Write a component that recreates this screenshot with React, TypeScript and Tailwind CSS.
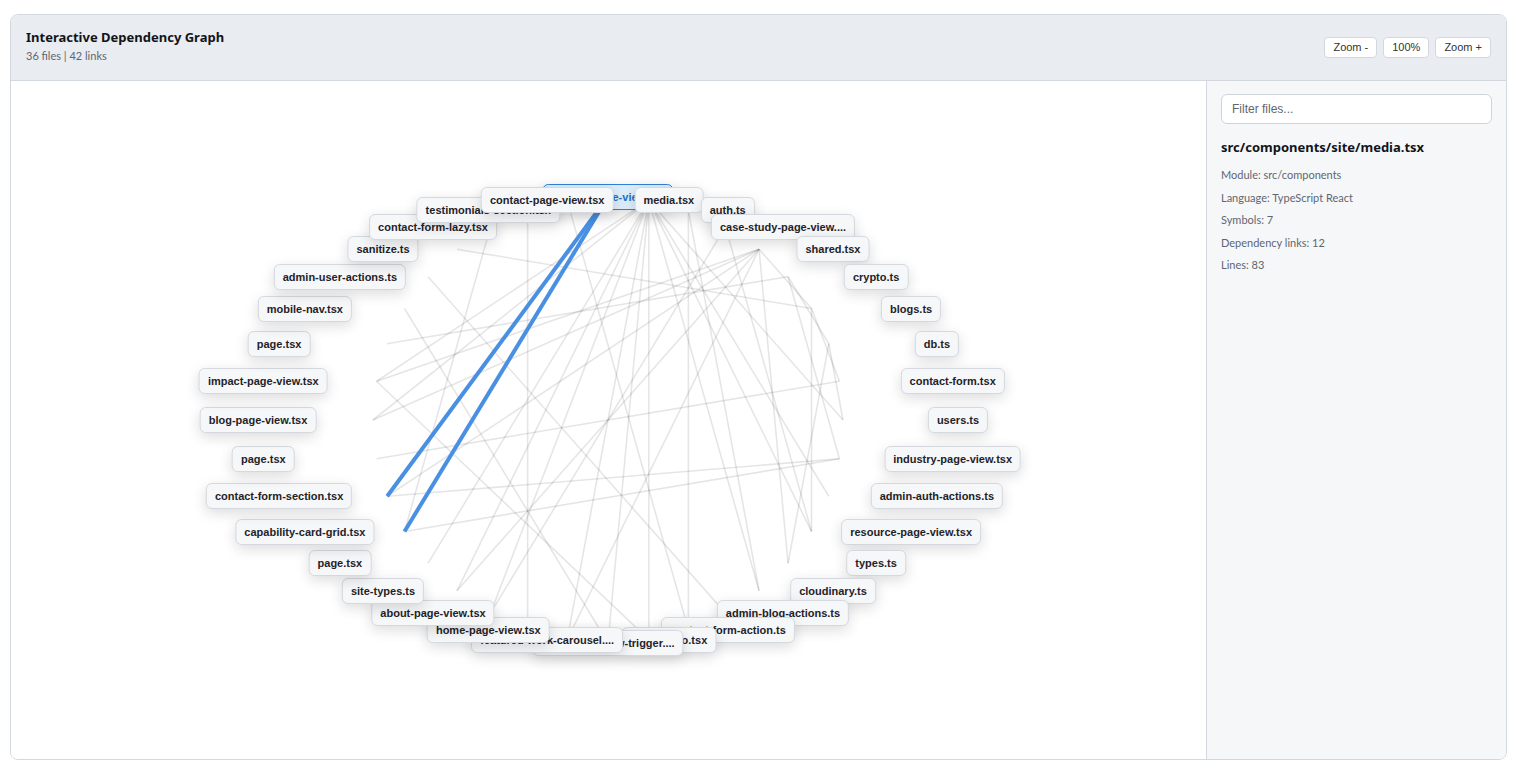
import React from "react";

const LABELS: string[] = [
  "service-page-view.tsx",
  "media.tsx",
  "auth.ts",
  "case-study-page-view....",
  "shared.tsx",
  "crypto.ts",
  "blogs.ts",
  "db.ts",
  "contact-form.tsx",
  "users.ts",
  "industry-page-view.tsx",
  "admin-auth-actions.ts",
  "resource-page-view.tsx",
  "types.ts",
  "cloudinary.ts",
  "admin-blog-actions.ts",
  "contact-form-action.ts",
  "footer-logo.tsx",
  "contact-window-trigger....",
  "featured-work-carousel....",
  "home-page-view.tsx",
  "about-page-view.tsx",
  "site-types.ts",
  "page.tsx",
  "capability-card-grid.tsx",
  "contact-form-section.tsx",
  "page.tsx",
  "blog-page-view.tsx",
  "impact-page-view.tsx",
  "page.tsx",
  "mobile-nav.tsx",
  "admin-user-actions.ts",
  "sanitize.ts",
  "contact-form-lazy.tsx",
  "testimonials-section.tsx",
  "contact-page-view.tsx",
];

const GRAY: [number, number][] = [
  [1, 17], [1, 28], [1, 21], [1, 22], [1, 19], [1, 18], [1, 12], [1, 11], [1, 14], [1, 9], [1, 27], [1, 23],
  [34, 20], [4, 28], [4, 27], [4, 13], [4, 6], [4, 22], [4, 19], [4, 25],
  [32, 6], [30, 18], [25, 10], [24, 10], [6, 12], [7, 13], [5, 7], [6, 8], [7, 9], [33, 24],
  [2, 16], [2, 14], [3, 21], [3, 12], [35, 16], [28, 17], [29, 5], [31, 15], [8, 26], [5, 10],
];

const BLUE: [number, number][] = [
  [0, 25],
  [0, 24],
];

const CX = 597;
const CY = 339;
const RX = 350;
const RY = 223;
const IRX = 235;

function angle(k: number) {
  return ((-90 + k * 10) * Math.PI) / 180;
}
function outer(k: number) {
  const a = angle(k);
  return { x: CX + RX * Math.cos(a), y: CY + RY * Math.sin(a) };
}
function inner(k: number) {
  const a = angle(k);
  return { x: CX + IRX * Math.cos(a), y: CY + RY * Math.sin(a) };
}

const ui = { fontFamily: "Lato, 'Noto Sans', sans-serif" };
const head = { fontFamily: "'Noto Sans', Lato, sans-serif" };
const arial = { fontFamily: "'Liberation Sans', Arial, sans-serif" };

export default function App() {
  return (
    <div className="min-h-[774px] bg-white pl-[10px] pr-[12px] pt-[14px]" style={ui}>
      <div className="flex h-[746px] flex-col overflow-hidden rounded-[8px] border border-[#d3d8de] bg-white">
        <div className="flex h-[66px] shrink-0 items-center justify-between border-b border-[#d3d8de] bg-[#e9ecf0] pl-[15px] pr-[15px]">
          <div className="mb-[3px]">
            <div className="text-[13px] font-bold leading-[18px] text-[#111418]" style={head}>
              Interactive Dependency Graph
            </div>
            <div className="mt-[2px] text-[11px] leading-[16px] text-[#5f6670]">36 files | 42 links</div>
          </div>
          <div className="flex items-center gap-[6px]" style={arial}>
            <button className="h-[21px] rounded-[4px] border border-[#d3d8de] bg-white px-[8px] text-[11px] text-[#333]">Zoom -</button>
            <button className="h-[21px] rounded-[4px] border border-[#d3d8de] bg-white px-[8px] text-[11px] text-[#333]">100%</button>
            <button className="h-[21px] rounded-[4px] border border-[#d3d8de] bg-white px-[8px] text-[11px] text-[#333]">Zoom +</button>
          </div>
        </div>
        <div className="flex min-h-0 flex-1">
          <div className="relative flex-1 overflow-hidden bg-white">
            <svg className="absolute left-0 top-0" width="1194" height="678">
              {GRAY.map(([a, b], i) => {
                const p = inner(a);
                const q = inner(b);
                return (
                  <line key={i} x1={p.x} y1={p.y} x2={q.x} y2={q.y} stroke="#000" strokeOpacity={0.1} strokeWidth={1.6} />
                );
              })}
              {BLUE.map(([a, b], i) => {
                const p = inner(a);
                const q = inner(b);
                return <line key={i} x1={p.x} y1={p.y} x2={q.x} y2={q.y} stroke="#4a90e2" strokeWidth={4} />;
              })}
            </svg>
            {LABELS.map((label, k) => {
              const p = outer(k);
              const sel = k === 0;
              return (
                <div
                  key={k}
                  className={
                    sel
                      ? "absolute whitespace-nowrap rounded-[6px] border border-[#2f7fd6] bg-[#dbecfa] px-[8px] py-[5px] text-[11px] font-bold leading-[14px] text-[#1f6fc6] shadow-[0_4px_14px_rgba(0,0,0,0.14)]"
                      : "absolute whitespace-nowrap rounded-[6px] border border-[#d5d9df] bg-[#f6f7f9] px-[8px] py-[5px] text-[11px] font-bold leading-[14px] text-[#1f2328] shadow-[0_4px_14px_rgba(0,0,0,0.14)]"
                  }
                  style={{ ...arial, left: p.x, top: p.y, transform: "translate(-50%, -50%)" }}
                >
                  {label}
                </div>
              );
            })}
          </div>
          <div className="w-[300px] shrink-0 border-l border-[#d3d8de] bg-[#f6f7f9] px-[14px] pt-[13px]">
            <input
              className="h-[30px] w-full rounded-[6px] border border-[#cfd4db] bg-white px-[10px] text-[12px] text-[#333] outline-none placeholder:text-[#5f6670]"
              style={arial}
              placeholder="Filter files..."
            />
            <div className="mt-[14px] text-[13px] font-bold leading-[18px] text-[#111418]" style={head}>
              src/components/site/media.tsx
            </div>
            <div className="mt-[11px] text-[11px] leading-[16px] text-[#5f6670]">Module: src/components</div>
            <div className="mt-[6.5px] text-[11px] leading-[16px] text-[#5f6670]">Language: TypeScript React</div>
            <div className="mt-[6.5px] text-[11px] leading-[16px] text-[#5f6670]">Symbols: 7</div>
            <div className="mt-[6.5px] text-[11px] leading-[16px] text-[#5f6670]">Dependency links: 12</div>
            <div className="mt-[6.5px] text-[11px] leading-[16px] text-[#5f6670]">Lines: 83</div>
          </div>
        </div>
      </div>
    </div>
  );
}
